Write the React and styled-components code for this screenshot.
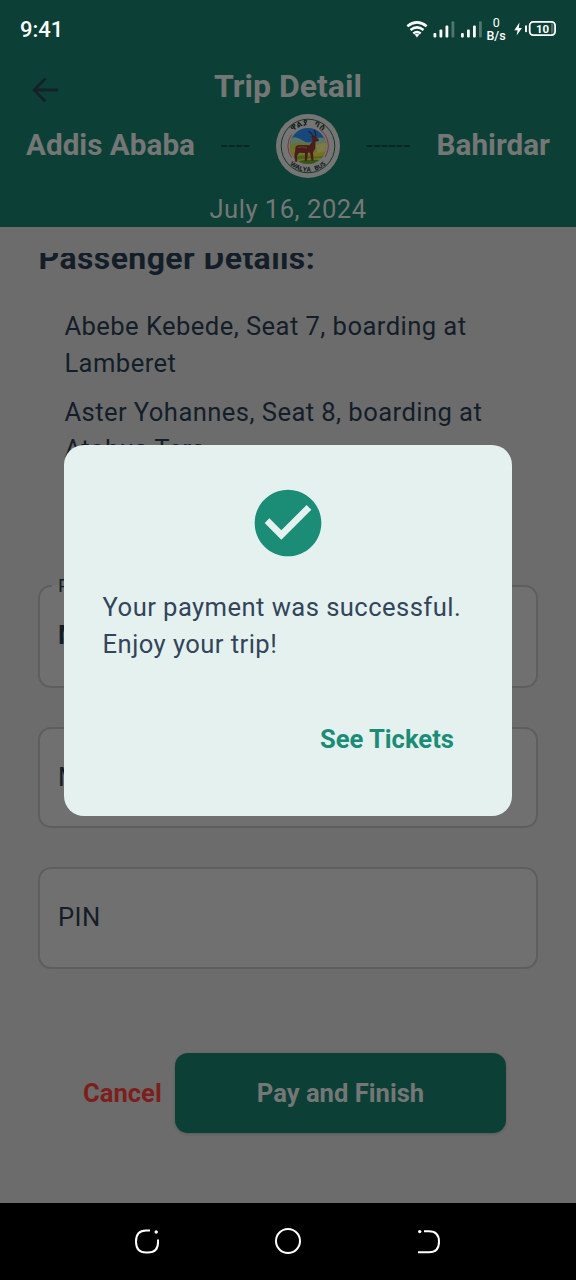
import React from 'react';
import styled, { createGlobalStyle } from 'styled-components';

const GlobalStyle = createGlobalStyle`
  * { box-sizing: border-box; }
  body { margin: 0; background: #000; font-family: Roboto, "Noto Sans", sans-serif; }
  button { font-family: inherit; border: 0; background: none; padding: 0; }
  h1, h2, p { margin: 0; }
  svg { display: block; }
`;

const Phone = styled.div`
  position: relative;
  width: 576px;
  height: 1280px;
  overflow: hidden;
  display: flex;
  flex-direction: column;
  background: #6c6c6c;
`;

const Header = styled.header`
  height: 227px;
  flex: none;
  background: #0c4036;
  color: #757777;
`;

const StatusBar = styled.div`
  height: 58px;
  padding: 0 20px 0 20px;
  display: flex;
  align-items: center;
  justify-content: space-between;
  color: #fff;
`;

const Clock = styled.span`
  font-size: 22px;
  font-weight: 500;
  line-height: 26px;
  padding-top: 2px;
`;

const TitleBar = styled.div`
  height: 56px;
  display: grid;
  grid-template-columns: 90px 1fr 90px;
  align-items: center;
`;

const BackButton = styled.button`
  color: #14202a;
  padding: 7px 0 0 28px;
`;

const Title = styled.h1`
  font-size: 32px;
  line-height: 38px;
  font-weight: 700;
  text-align: center;
`;

const Route = styled.div`
  height: 64px;
  display: flex;
  align-items: center;
  padding: 0 26px;
  justify-content: space-between;
`;

const City = styled.span`
  font-size: 29.7px;
  line-height: 36px;
  font-weight: 700;
  white-space: nowrap;
  padding-bottom: 2px;
`;

const Dashes = styled.span`
  font-size: 25.6px;
  line-height: 30px;
  letter-spacing: 0.4px;
  color: #0a2523;
  padding-bottom: 2px;
`;

const TripDate = styled.p`
  font-size: 25.6px;
  line-height: 36px;
  letter-spacing: 0.5px;
  text-align: center;
  padding-top: 13px;
`;

const Content = styled.main`
  flex: 1;
  min-height: 0;
  margin-top: 26px;
  padding: 0 38px;
  overflow: hidden;
  color: #141e29;
`;

const SectionTitle = styled.h2`
  font-size: 32px;
  line-height: 40px;
  font-weight: 700;
  letter-spacing: 0.4px;
  margin: -15px 0 0 0.6px;
`;

const Passengers = styled.div`
  padding: 30px 26px 0 26.4px;
  display: flex;
  flex-direction: column;
  gap: 13px;
  height: 308px;
`;

const Passenger = styled.p`
  font-size: 25.6px;
  line-height: 36.6px;
  letter-spacing: 0.43px;
  white-space: nowrap;
`;

const Fields = styled.div`
  display: flex;
  flex-direction: column;
  gap: 39px;
`;

const Field = styled.fieldset`
  height: ${(p) => (p.$filled ? 110.6 : 101.6)}px;
  margin: ${(p) => (p.$filled ? '-9px' : '0')} 0 0;
  min-width: 0;
  padding: 0 18px;
  border: 2px solid #5e5e5e;
  border-radius: 13px;
  background: #707070;
`;

const Value = styled.div`
  font-size: 25.6px;
  letter-spacing: 0.45px;
  line-height: ${(p) => (p.$filled ? 80 : 97)}px;
  font-weight: ${(p) => (p.$filled ? 700 : 400)};
`;

const Legend = styled.legend`
  height: 18px;
  margin-left: -6px;
  padding: 0 6px;
  font-size: 19.2px;
  line-height: 18px;
  font-weight: 400;
  letter-spacing: 0.4px;
`;

const Actions = styled.div`
  padding: 84px 32px 0 45px;
  display: flex;
  align-items: center;
  justify-content: space-between;
`;

const CancelButton = styled.button`
  color: #7c1f1c;
  font-size: 25.6px;
  font-weight: 700;
`;

const PayButton = styled.button`
  width: 331px;
  height: 80px;
  border-radius: 13px;
  background: #0c4036;
  color: #757777;
  font-size: 25.6px;
  font-weight: 700;
  box-shadow: 0 1px 3px rgba(0, 0, 0, 0.2);
`;

const NavBar = styled.nav`
  height: 77px;
  flex: none;
  background: #000;
  display: flex;
  align-items: center;
  justify-content: space-between;
  padding: 0 133px 1px;
`;

const Dialog = styled.section`
  position: absolute;
  left: 64px;
  top: 445px;
  width: 448px;
  height: 371px;
  border-radius: 20px;
  background: #e5f1ef;
  color: #33455a;
  display: flex;
  flex-direction: column;
  padding: 38px 38px 0;
`;

const CheckIcon = styled.svg`
  width: 80px;
  height: 80px;
  align-self: center;
  fill: #1b8d77;
`;

const Message = styled.p`
  padding: 26px 0 0 0.6px;
  font-size: 25.6px;
  line-height: 37px;
  letter-spacing: 0.44px;
  white-space: nowrap;
`;

const TicketsButton = styled.button`
  align-self: flex-end;
  margin: 60px 20px 0 0;
  font-size: 25.6px;
  line-height: 32px;
  font-weight: 700;
  color: #1b8d77;
`;

function StatusIcons() {
  return (
    <svg width="152" height="40" viewBox="404 9 152 40" fill="none">
      <g stroke="#fff" strokeWidth="2.5" strokeLinecap="butt">
        <path d="M407.3 26.3q9.7-7.8 19.4 0" />
        <path d="M410.5 29.9q6.5-5 13 0" />
        <path d="M413.3 33.4q3.7-2.8 7.4 0" />
      </g>
      <path d="M414.7 34.6q2.3-1.6 4.6 0L417 37.5z" fill="#fff" />
      {[433.5, 461].map((x) => (
        <g key={x} fill="#fff">
          <rect x={x} y="33" width="2.8" height="4.5" rx="1" />
          <rect x={x + 6} y="29.5" width="2.8" height="8" rx="1" />
          <rect x={x + 12} y="25.5" width="2.8" height="12" rx="1" />
          <rect x={x + 18} y="21.3" width="2.8" height="16.2" rx="1" opacity=".28" />
        </g>
      ))}
      <g fill="#fff" fontFamily="Roboto, sans-serif" fontWeight="500" textAnchor="middle">
        <text x="496.3" y="27.3" fontSize="12.5" fontWeight="400">0</text>
        <text x="496" y="40.3" fontSize="12.5">B/s</text>
        <text x="542.6" y="32.7" fontSize="11.5" fontWeight="700">10</text>
      </g>
      <path d="M519.500 22.500l-5.200 7.800h3.300l-1 5.300 5.400-7.600h-3.200z" fill="#fff" />
      <rect x="525" y="25.200" width="2" height="7" rx="1" fill="#fff" />
      <rect x="529.700" y="21.800" width="25.400" height="13.300" rx="3.600" stroke="#fff" strokeWidth="1.800" />
      <rect x="551" y="23.500" width="2.500" height="10" fill="#fff" opacity=".25" />
    </svg>
  );
}

function BusLogo() {
  return (
    <svg width="64" height="64" viewBox="0 0 64 64">
      <defs>
        <clipPath id="scene"><circle cx="32" cy="32" r="18" /></clipPath>
        <path id="arcTop" d="M11.200 32a20.800 20.800 0 0 1 41.600 0" />
        <path id="arcBottom" d="M6.200 32a25.800 25.800 0 0 0 51.600 0" />
      </defs>
      <circle cx="32" cy="32" r="32" fill="#757575" />
      <circle cx="32" cy="32" r="26.800" fill="none" stroke="#173a25" strokeWidth="1" />
      <path d="M15.500 20.500a20.200 20.200 0 0 0 0 23M43.500 15.200a20.200 20.200 0 0 1 5.500 27.800" fill="none" stroke="#7a2f2c" strokeWidth=".9" />
      <g clipPath="url(#scene)">
        <rect x="12" y="12" width="40" height="40" fill="#17487c" />
        <path d="M13 25q6-4 13 1t12 0 14 0v28H12z" fill="#5c7462" />
        <path d="M12 31q10-4 20-1t20-3v25H12z" fill="#67722b" />
        <path d="M12 36q12-3 22 1t18-4v20H12z" fill="#747325" />
        <path d="M40 31l11-3v9l-10 2z" fill="#7b7b43" />
        <path d="M16 43q9-3 18-1t16-2l-3 4q-14 0-30 2z" fill="#4a651b" />
        <path d="M20 48q8-3 24-2l-5 4H24z" fill="#365719" />
      </g>
      <path d="M19.500 33q1-2.400 6-2l8 .2 2.800-4 .2-3.200-1.800-2 3 .3 1-.6 1.300 1.300 3 2.700-.8 1.500-2.700.2-.3 7-2.200 3.800.5 8.600h-2l-1.500-8-2-.3-1.200 8.800h-2l.2-8.400-6-.2-2 3.400.2 5.700h-2l-.8-7 .7-3.800z" fill="#4a1c1b" />
      <path d="M22 33.500q5-1.500 9 .5" fill="none" stroke="#71413a" strokeWidth="1" />
      <path d="M37 23q-1-4.500-5-5.500M39.500 22.500q.8-4-1.500-6" fill="none" stroke="#26201f" strokeWidth="1.200" />
      <g fill="#101716" fontFamily='"Noto Sans Ethiopic", "Liberation Serif", serif' fontWeight="700">
        <text fontSize="7.800" wordSpacing="3.500" letterSpacing=".3"><textPath href="#arcTop" startOffset="50%" textAnchor="middle">ዋልያ ባስ</textPath></text>
        <text fontSize="6.400" wordSpacing="2.500" letterSpacing=".1"><textPath href="#arcBottom" startOffset="50%" textAnchor="middle">WALYA BUS</textPath></text>
      </g>
    </svg>
  );
}

export default function App() {
  return (
    <>
      <GlobalStyle />
      <Phone>
        <Header>
          <StatusBar>
            <Clock>9:41</Clock>
            <StatusIcons />
          </StatusBar>
          <TitleBar>
            <BackButton aria-label="Back">
              <svg width="34" height="34" viewBox="0 0 34 34" fill="none" stroke="currentColor" strokeWidth="2.8">
                <path d="M30 17H6M17.500 5.500L6 17l11.500 11.500" />
              </svg>
            </BackButton>
            <Title>Trip Detail</Title>
          </TitleBar>
          <Route>
            <City>Addis Ababa</City>
            <Dashes>----</Dashes>
            <BusLogo />
            <Dashes>------</Dashes>
            <City>Bahirdar</City>
          </Route>
          <TripDate>July 16, 2024</TripDate>
        </Header>
        <Content>
          <SectionTitle>Passenger Details:</SectionTitle>
          <Passengers>
            <Passenger>Abebe Kebede, Seat 7, boarding at<br />Lamberet</Passenger>
            <Passenger>Aster Yohannes, Seat 8, boarding at<br />Atobus Tera</Passenger>
          </Passengers>
          <Fields>
            <Field $filled>
              <Legend>P</Legend>
              <Value $filled>M</Value>
            </Field>
            <Field><Value>M</Value></Field>
            <Field><Value>PIN</Value></Field>
          </Fields>
          <Actions>
            <CancelButton>Cancel</CancelButton>
            <PayButton>Pay and Finish</PayButton>
          </Actions>
        </Content>
        <NavBar>
          <svg width="28" height="28" viewBox="0 0 28 28" fill="none" stroke="#fff" strokeWidth="2">
            <path d="M17 3.500h-4q-10 0-10 11T13 25.500h2q10 0 10-10v-3" />
            <circle cx="23.200" cy="5" r="1.700" fill="#fff" stroke="none" />
          </svg>
          <svg width="28" height="28" viewBox="0 0 28 28" fill="none" stroke="#fff" strokeWidth="2">
            <circle cx="14" cy="14" r="12" />
          </svg>
          <svg width="28" height="28" viewBox="0 0 28 28" fill="none" stroke="#fff" strokeWidth="2">
            <path d="M9 4.300h5q10 0 10 10.500T14 25.300H3" />
            <circle cx="4.700" cy="4.600" r="1.700" fill="#fff" stroke="none" />
          </svg>
        </NavBar>
        <Dialog role="dialog">
          <CheckIcon viewBox="0 0 24 24">
            <path d="M12 2C6.480 2 2 6.480 2 12s4.480 10 10 10 10-4.480 10-10S17.520 2 12 2zm-2 15l-5-5 1.410-1.410L10 14.170l7.590-7.590L19 8l-9 9z" />
          </CheckIcon>
          <Message>Your payment was successful.<br />Enjoy your trip!</Message>
          <TicketsButton>See Tickets</TicketsButton>
        </Dialog>
      </Phone>
    </>
  );
}
